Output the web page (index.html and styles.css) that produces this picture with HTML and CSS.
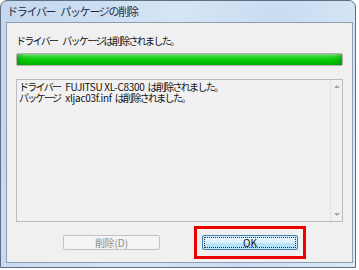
FILE: index.html
```html
<!DOCTYPE html>
<html lang="ja">
<head>
    <meta charset="UTF-8">
    <title>ドライバー パッケージの削除</title>
    <link rel="stylesheet" href="styles.css">
</head>
<body>
    <div class="window">
        <div class="titlebar"><span class="jp gap">ドライバー</span><span class="jp">パッケージの削除</span></div>

        <div class="client">
            <p class="status"><span class="jp gap">ドライバー</span><span class="jp">パッケージは削除されました。</span></p>

            <!-- 進行状況バー -->
            <div class="progress"><div class="progress-fill"></div></div>

            <!-- 結果ログ -->
            <div class="log">
                <div class="log-text">
                    <div class="log-line"><span class="jp gap">ドライバー</span><span class="gap">FUJITSU XL-C8300</span><span class="jp">は削除されました。</span></div>
                    <div class="log-line"><span class="jp gap">パッケージ</span><span class="gap">xljac03f.inf</span><span class="jp">は削除されました。</span></div>
                </div>
                <div class="scrollbar">
                    <span class="arrow up"></span>
                    <span class="arrow down"></span>
                </div>
            </div>

            <div class="buttons">
                <button class="btn" disabled><span class="jp">削除</span>(<u>D</u>)</button>
                <div class="highlight">
                    <button class="btn default">OK</button>
                </div>
            </div>
        </div>
    </div>
</body>
</html>
```

FILE: styles.css
```css
body {
    margin: 0;
    background-color: #ffffff;
    font-family: 'Noto Sans CJK JP', sans-serif;
}

.jp {
    letter-spacing: -1.7px;
    margin-right: 1.7px;
}

.gap {
    margin-right: 5px;
}

.window {
    box-sizing: border-box;
    width: 356px;
    height: 268px;
    border: 1px solid #5f6e80;
    border-radius: 7px 7px 0 0;
    background: linear-gradient(100deg, #c3d7ee 0%, #d6e5f5 45%, #c9dcf1 70%, #dce9f7 100%);
    padding: 0 2px 4px 5px;
    display: flex;
    flex-direction: column;
}

.titlebar {
    height: 21px;
    line-height: 21px;
    font-size: 11px;
    color: #1b2b40;
    padding-left: 1px;
}

.titlebar .jp {
    letter-spacing: -1.3px;
    margin-right: 1.3px;
}

.titlebar .gap {
    margin-right: 5px;
}

.client {
    flex: 1;
    border: 1px solid #8e9db0;
    background-color: #f0f0f0;
    padding: 0 9px;
    display: flex;
    flex-direction: column;
}

.status {
    margin: 0;
    padding-top: 12px;
    height: 18px;
    font-size: 10px;
    line-height: 12px;
    color: #111;
}

.status .gap,
.log-text .jp.gap {
    margin-right: 5px;
}

.progress {
    height: 11px;
    border: 1px solid #b2b2b2;
    border-radius: 2px;
    background-color: #e6e6e6;
}

.progress-fill {
    height: 100%;
    background: linear-gradient(#8ee88e 0%, #2fd82f 25%, #06c806 55%, #06bb06 100%);
    box-shadow: inset 6px 0 6px -3px rgba(0, 90, 0, 0.35), inset -6px 0 6px -3px rgba(0, 90, 0, 0.35);
}

.log {
    margin-top: 13px;
    height: 141px;
    border: 1px solid #b8bcc4;
    background-color: #f1f1f1;
    display: flex;
}

.log-text {
    flex: 1;
    padding: 1px 2px;
    font-size: 10px;
    color: #111;
}

.log-line {
    display: flex;
    align-items: center;
    height: 11px;
}

.log-line span {
    display: inline-block;
    height: 11px;
    line-height: 11px;
    overflow: visible;
}

.log-text .gap:not(.jp) {
    letter-spacing: -0.3px;
    margin-right: 3px;
}

.scrollbar {
    width: 11px;
    border-left: 1px dotted #d6d6d6;
    display: flex;
    flex-direction: column;
    justify-content: space-between;
    align-items: center;
    padding: 5px 0;
}

.arrow {
    width: 0;
    height: 0;
    border-left: 3px solid transparent;
    border-right: 3px solid transparent;
}

.arrow.up {
    border-bottom: 3px solid #a8a8a8;
}

.arrow.down {
    border-top: 3px solid #a8a8a8;
}

.buttons {
    margin-top: 4px;
    height: 33px;
    display: flex;
    align-items: center;
}

.btn {
    box-sizing: border-box;
    width: 97px;
    height: 15px;
    padding: 0;
    font-family: 'Noto Sans CJK JP', sans-serif;
    font-size: 10px;
    line-height: 13px;
    border: 1px solid #adadad;
    border-radius: 2px;
    background: linear-gradient(#f6f6f6 0%, #ececec 50%, #e0e0e0 51%, #d8d8d8 100%);
    color: #111;
}

.btn .jp {
    letter-spacing: -0.5px;
    margin-right: 0.5px;
}

.btn[disabled] {
    margin-left: 47px;
    background: #f4f4f4;
    border-color: #c2c2c2;
    color: #8d8d8d;
}

.btn[disabled] u {
    text-decoration: none;
}

.highlight {
    margin-left: 34px;
    border: 3px solid #ee0000;
    padding: 6px 5px;
    line-height: 0;
}

.btn.default {
    width: 96px;
    border-color: #3c7fb1;
    background: linear-gradient(#eaf6fd 0%, #d9f0fc 50%, #bee6fd 51%, #a7d9f5 100%);
    box-shadow: inset 0 0 0 1px #cfe9f7;
    outline: 1px dotted #333;
    outline-offset: -3px;
}
```
